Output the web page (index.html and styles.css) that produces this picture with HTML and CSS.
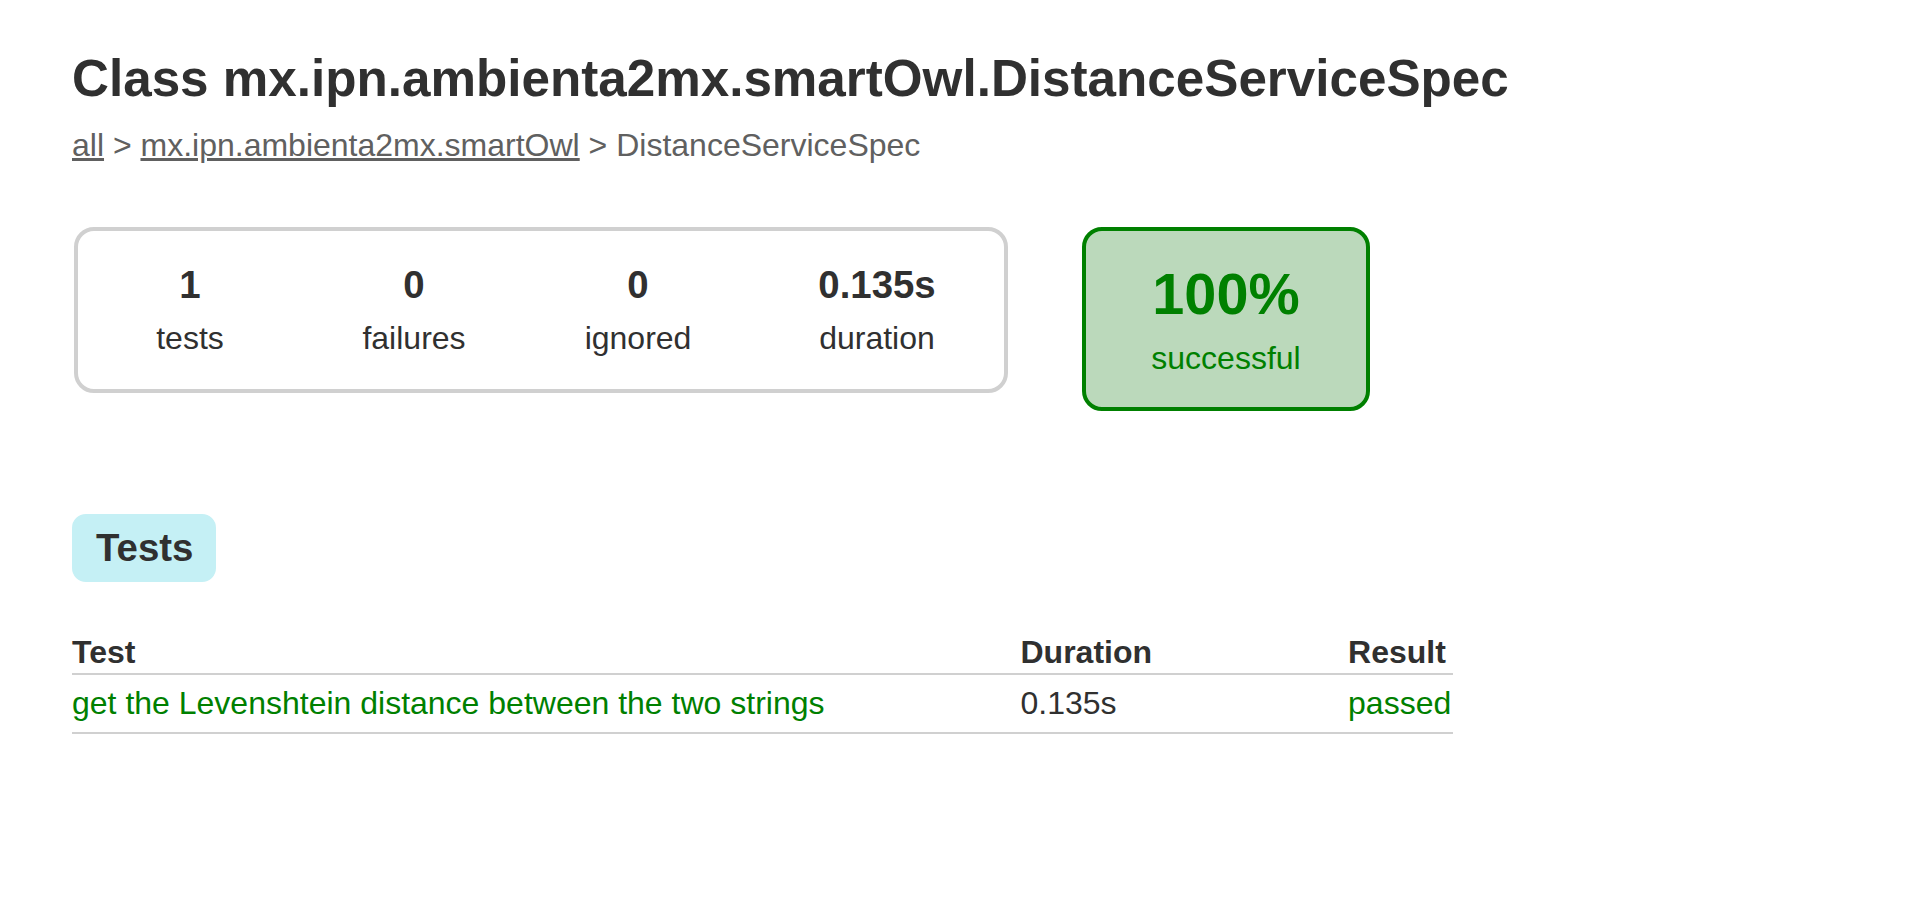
FILE: index.html
```
<!DOCTYPE html>
<html>
<head>
<meta charset="utf-8">
<title>Test results - Class mx.ipn.ambienta2mx.smartOwl.DistanceServiceSpec</title>
<link rel="stylesheet" href="styles.css">
</head>
<body>
<div class="content">
  <h1 class="title">Class mx.ipn.ambienta2mx.smartOwl.DistanceServiceSpec</h1>
  <div class="breadcrumbs"><a href="#">all</a> &gt; <a href="#">mx.ipn.ambienta2mx.smartOwl</a> &gt; DistanceServiceSpec</div>

  <div class="summary">
    <table class="summary-table">
      <tr>
        <td class="cell">
          <div class="summary-group">
            <table class="group-table">
              <tr>
                <td class="cell">
                  <div class="info-box">
                    <div class="counter">1</div>
                    <p class="label">tests</p>
                  </div>
                </td>
                <td class="cell">
                  <div class="info-box">
                    <div class="counter">0</div>
                    <p class="label">failures</p>
                  </div>
                </td>
                <td class="cell">
                  <div class="info-box">
                    <div class="counter">0</div>
                    <p class="label">ignored</p>
                  </div>
                </td>
                <td class="cell">
                  <div class="info-box duration">
                    <div class="counter">0.135s</div>
                    <p class="label">duration</p>
                  </div>
                </td>
              </tr>
            </table>
          </div>
        </td>
        <td class="cell">
          <div class="info-box success-rate">
            <div class="percent">100%</div>
            <p class="label">successful</p>
          </div>
        </td>
      </tr>
    </table>
  </div>

  <div class="tabs">
    <ul class="tab-links">
      <li class="tab-link selected"><h2 class="tab-title">Tests</h2></li>
    </ul>
    <div class="tab">
      <table class="tests-table">
        <thead>
          <tr>
            <th class="col">Test</th>
            <th class="col">Duration</th>
            <th class="col">Result</th>
          </tr>
        </thead>
        <tbody>
          <tr>
            <td class="col success">get the Levenshtein distance between the two strings</td>
            <td class="col">0.135s</td>
            <td class="col success">passed</td>
          </tr>
        </tbody>
      </table>
    </div>
  </div>
</div>
</body>
</html>
```
FILE: styles.css
```
html, body {
  margin: 0;
  padding: 0;
  background: #ffffff;
}

body {
  font-family: "Liberation Sans", Arial, Helvetica, sans-serif;
  font-size: 32px;
  color: #303030;
}

.content {
  padding: 49px 72px 60px 72px;
}

.title {
  font-size: 51.2px;
  font-weight: bold;
  margin: 0 0 19px 0;
  white-space: nowrap;
  line-height: normal;
}

.breadcrumbs {
  color: #606060;
  white-space: nowrap;
}

.breadcrumbs a {
  color: #606060;
  text-decoration: underline;
}

.summary {
  margin-top: 61px;
  margin-bottom: 81px;
}

.summary-table,
.group-table {
  border-collapse: collapse;
}

.cell {
  vertical-align: top;
  padding: 2px;
}

.summary-group {
  border: 4px solid #d0d0d0;
  border-radius: 20px;
}

.info-box {
  width: 220px;
  padding: 30px 0;
  text-align: center;
}

.info-box.duration {
  width: 250px;
}

.counter {
  font-size: 38.4px;
  font-weight: bold;
  margin-bottom: 13px;
}

.label {
  margin: 0;
}

.success-rate {
  width: 280px;
  margin-left: 70px;
  border: 4px solid #008000;
  border-radius: 20px;
  background-color: #bbd9bb;
  color: #008000;
}

.percent {
  font-size: 57.6px;
  font-weight: bold;
  margin-bottom: 13px;
}

.tab-links {
  margin: 0;
  padding: 20px 0;
  overflow: auto;
  list-style: none;
}

.tab-link {
  float: left;
  list-style: none;
  padding: 10px 21px 10px 22px;
  margin-right: 50px;
  border: 2px solid #c5f0f5;
  border-radius: 14px;
  background-color: #c5f0f5;
}

.tab-title {
  margin: 0;
  padding: 0;
  font-size: 38.4px;
  font-weight: bold;
  white-space: nowrap;
}

.tests-table {
  margin-top: 30px;
  border-collapse: collapse;
  min-width: 700px;
  border-bottom: 2px solid #d0d0d0;
}

.tests-table th {
  text-align: left;
  white-space: nowrap;
  font-weight: bold;
  padding: 2px 2px 2px 194px;
  border-bottom: 2px solid #d0d0d0;
}

.tests-table td {
  white-space: nowrap;
  padding: 10px 2px 10px 194px;
}

.tests-table th:first-child,
.tests-table td:first-child {
  padding-left: 0;
}

.success {
  color: #008000;
}
```
